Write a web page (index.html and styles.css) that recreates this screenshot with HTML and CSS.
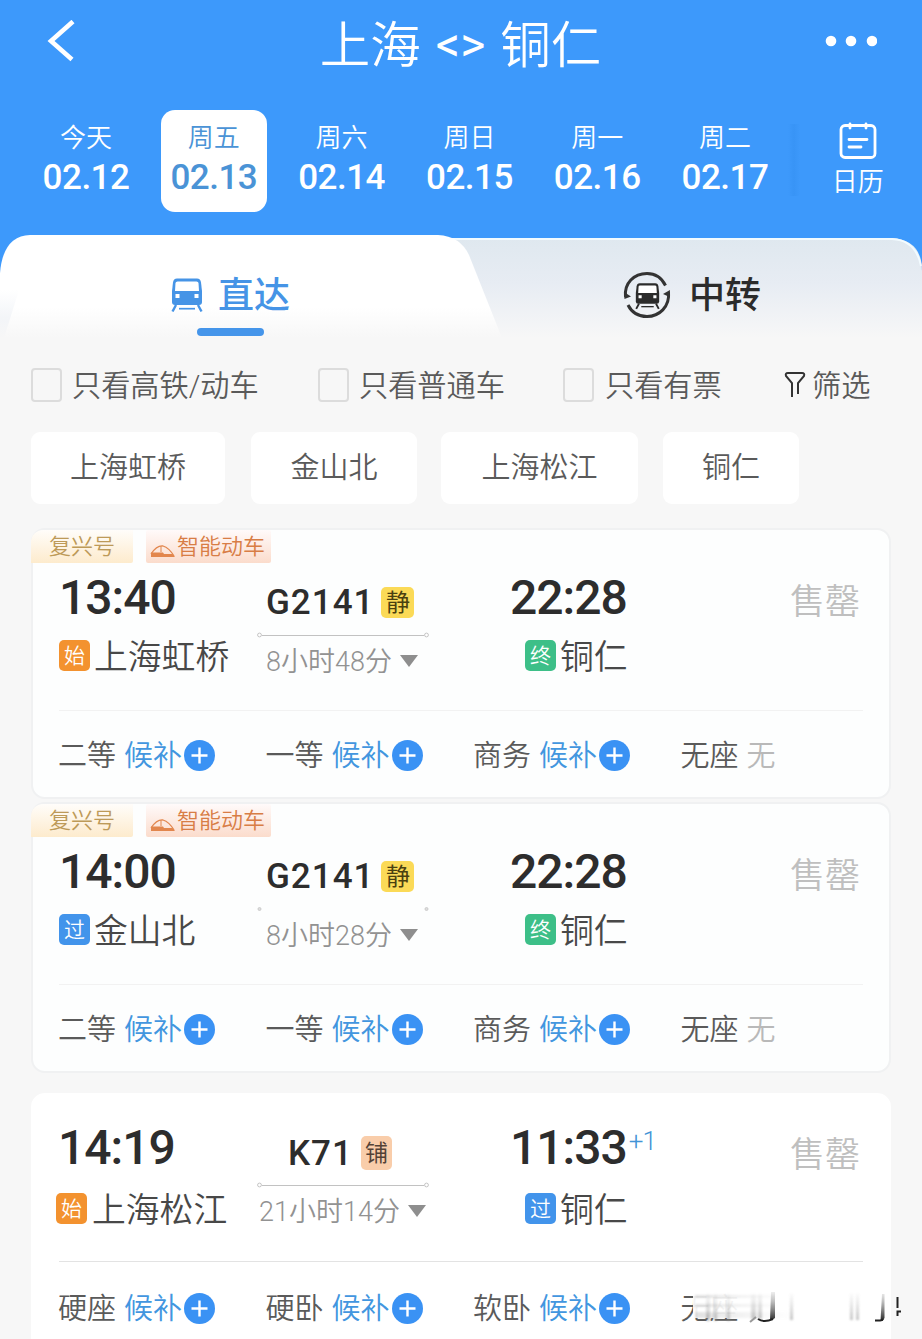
FILE: index.html
```html
<!DOCTYPE html>
<html lang="zh-CN">
<head>
<meta charset="utf-8">
<title>上海 - 铜仁</title>
<link rel="stylesheet" href="styles.css">
</head>
<body>
<svg class="defs" width="0" height="0">
  <symbol id="plus" viewBox="0 0 31 31"><circle cx="15.5" cy="15.5" r="15.5" fill="#3a92f4"/><path d="M15.5 7.500v16M7.500 15.500h16" stroke="#fff" stroke-width="2.400"/></symbol>
  <symbol id="bullet" viewBox="0 0 25 14"><path d="M1 10C5 4 9 1.500 13 2C18 3.500 21 7 24 12" fill="none" stroke="#e2864d" stroke-width="1.300"/><path d="M1 8.500h12l1 1.500h8.500L25 13H1Z" fill="#e2864d"/><path d="M11 2v6" stroke="#e2864d"/></symbol>
  <symbol id="route" viewBox="0 0 172 6"><circle cx="2.500" cy="3" r="1.900" fill="#fff" stroke="#c4c4c4"/><circle cx="169.500" cy="3" r="1.900" fill="#fff" stroke="#c4c4c4"/><path d="M5 3.500h162" stroke="#c2c2c2"/></symbol>
  <symbol id="ends" viewBox="0 0 172 6"><circle cx="2.500" cy="3" r="1.500" fill="#ddd" stroke="#ccc"/><circle cx="169.500" cy="3" r="1.500" fill="#ddd" stroke="#ccc"/></symbol>
  <symbol id="train" viewBox="0 0 32 36"><path d="M6 1.500h20q3.500 0 4 4L31 14v11q0 3-3 3H4q-3 0-3-3V14L2 5.500q.5-4 4-4Z" fill="currentColor"/><path d="M6.500 4.500h19q1.800 0 2 1.500L28 14H4L4.500 6Q4.700 4.500 6.500 4.500Z" class="cut"/><path d="M4.500 17h4v4h-4zM23.500 17h4v4h-4z" class="cut"/><path d="M5 28 1.500 34.500M27 28 30.500 34.500" stroke="currentColor" stroke-width="2.400"/><path d="M8 31.700h16" stroke="currentColor" stroke-width="1.700"/></symbol>
</svg>

<header class="header">
  <div class="titlebar">
    <svg class="back" width="28" height="42" viewBox="0 0 28 42"><path d="M26 1.500 4 21 25 39.500" fill="none" stroke="#fff" stroke-width="4.600"/></svg>
    <h1 class="title"><span>上海</span><span class="swap">&lt;&gt;</span><span>铜仁</span></h1>
    <svg class="more" width="52" height="12" viewBox="0 0 52 12"><circle cx="6" cy="6" r="5.300"/><circle cx="26" cy="6" r="5.300"/><circle cx="47" cy="6" r="5.300"/></svg>
  </div>
  <nav class="dates">
    <div class="date"><span>今天</span><b>02.12</b></div>
    <div class="date selected"><span>周五</span><b>02.13</b></div>
    <div class="date"><span>周六</span><b>02.14</b></div>
    <div class="date"><span>周日</span><b>02.15</b></div>
    <div class="date"><span>周一</span><b>02.16</b></div>
    <div class="date"><span>周二</span><b>02.17</b></div>
    <div class="shade"></div>
    <div class="calendar">
      <svg width="38" height="38" viewBox="0 0 38 38" fill="none" stroke="#fff" stroke-width="2.800" stroke-linecap="round"><rect x="2" y="3.500" width="34" height="32" rx="4"/><path d="M11 2v4M27 2v4M10 17.500h18M10 25h12"/></svg>
      <span>日历</span>
    </div>
  </nav>
</header>

<div class="tabs">
  <svg class="tabs-bg" width="922" height="110" viewBox="0 0 922 110">
    <defs>
      <linearGradient id="g1" x1="0" y1="0" x2="0" y2="1"><stop offset="0" stop-color="#fff"/><stop offset=".7" stop-color="#fff"/><stop offset="1" stop-color="#f7f7f7"/></linearGradient>
      <linearGradient id="g2" x1="0" y1="0" x2="0" y2="1"><stop offset="0" stop-color="#dfe8ef"/><stop offset=".45" stop-color="#e7ecf3"/><stop offset="1" stop-color="#f7f7f7"/></linearGradient>
      <linearGradient id="g3" x1="0" y1="0" x2="0" y2="1"><stop offset="0" stop-color="#f2f5f9" stop-opacity="0"/><stop offset=".6" stop-color="#f3f5f8"/><stop offset="1" stop-color="#f7f7f7"/></linearGradient>
    </defs>
    <path d="M0 110V40H922V110Z" fill="#f7f7f7"/>
    <path d="M430 3H892Q922 5 922 36V103H430Z" fill="url(#g2)"/>
    <path d="M440 4H892Q916 5 921 31" fill="none" stroke="#f2fbff" stroke-width="2"/>
    <path d="M0 38Q3 1 30 0H438Q460 1 469 20L502 103H0Z" fill="url(#g1)"/>
    <path d="M0 55H19L4 103H0Z" fill="url(#g3)"/>
  </svg>
  <div class="tab active"><svg class="ic-train" width="32" height="36"><use href="#train"/></svg><span>直达</span></div>
  <div class="tab">
    <svg class="ic-loop" width="50" height="50" viewBox="0 0 50 50"><path d="M3.500 27C2 13 12 3.500 25 3.500c9 0 15 5 18.500 12M46.500 22C48 37 37 46.500 25 46.500 15 46.500 9 41 6 35" fill="none" stroke="#333" stroke-width="3"/><path d="M2 22 9 26.500 2.500 29ZM48 20 41 24 47.500 27Z" fill="#333"/><svg x="13" y="12" width="25" height="28" viewBox="0 0 32 36"><use href="#train" width="32" height="36"/></svg></svg>
    <span>中转</span>
  </div>
  <i class="underline"></i>
</div>

<div class="filters">
  <label class="check c1"><i></i>只看高铁/动车</label>
  <label class="check c2"><i></i>只看普通车</label>
  <label class="check c3"><i></i>只看有票</label>
  <span class="funnel"><svg width="22" height="28" viewBox="0 0 22 28" fill="none" stroke="#333" stroke-width="2"><path d="M8 26V12L2 5Q1 2 4 2H18Q21 2 20 5L14 12V23"/></svg>筛选</span>
</div>

<div class="chips">
  <span class="chip w1">上海虹桥</span><span class="chip w2">金山北</span><span class="chip w3">上海松江</span><span class="chip w4">铜仁</span>
</div>

<main class="list">
  <section class="card">
    <div class="tags"><span class="tag gold">复兴号</span><span class="tag smart"><svg width="25" height="14"><use href="#bullet"/></svg>智能动车</span></div>
    <div class="trip">
      <div class="dep"><div class="time">13:40</div><div class="station"><i class="badge start">始</i>上海虹桥</div></div>
      <div class="mid"><div class="no">G2141<i class="mark quiet">静</i></div><svg class="route" width="172" height="6"><use href="#route"/></svg><div class="dur">8小时48分<i class="arrow"></i></div></div>
      <div class="arr"><div class="time">22:28</div><div class="station"><i class="badge end">终</i>铜仁</div></div>
      <div class="status">售罄</div>
    </div>
    <div class="seats">
      <div class="seat">二等<em>候补</em><svg class="plus" width="31" height="31"><use href="#plus"/></svg></div>
      <div class="seat">一等<em>候补</em><svg class="plus" width="31" height="31"><use href="#plus"/></svg></div>
      <div class="seat">商务<em>候补</em><svg class="plus" width="31" height="31"><use href="#plus"/></svg></div>
      <div class="seat">无座<em class="none">无</em></div>
    </div>
  </section>

  <section class="card">
    <div class="tags"><span class="tag gold">复兴号</span><span class="tag smart"><svg width="25" height="14"><use href="#bullet"/></svg>智能动车</span></div>
    <div class="trip">
      <div class="dep"><div class="time">14:00</div><div class="station"><i class="badge pass">过</i>金山北</div></div>
      <div class="mid"><div class="no">G2141<i class="mark quiet">静</i></div><svg class="route" width="172" height="6"><use href="#ends"/></svg><div class="dur">8小时28分<i class="arrow"></i></div></div>
      <div class="arr"><div class="time">22:28</div><div class="station"><i class="badge end">终</i>铜仁</div></div>
      <div class="status">售罄</div>
    </div>
    <div class="seats">
      <div class="seat">二等<em>候补</em><svg class="plus" width="31" height="31"><use href="#plus"/></svg></div>
      <div class="seat">一等<em>候补</em><svg class="plus" width="31" height="31"><use href="#plus"/></svg></div>
      <div class="seat">商务<em>候补</em><svg class="plus" width="31" height="31"><use href="#plus"/></svg></div>
      <div class="seat">无座<em class="none">无</em></div>
    </div>
  </section>

  <section class="card plain">
    <div class="trip">
      <div class="dep"><div class="time">14:19</div><div class="station"><i class="badge start">始</i>上海松江</div></div>
      <div class="mid"><div class="no">K71<i class="mark berth">铺</i></div><svg class="route" width="172" height="6"><use href="#route"/></svg><div class="dur">21小时14分<i class="arrow"></i></div></div>
      <div class="arr"><div class="time">11:33<sup>+1</sup></div><div class="station"><i class="badge pass">过</i>铜仁</div></div>
      <div class="status">售罄</div>
    </div>
    <div class="seats">
      <div class="seat">硬座<em>候补</em><svg class="plus" width="31" height="31"><use href="#plus"/></svg></div>
      <div class="seat">硬卧<em>候补</em><svg class="plus" width="31" height="31"><use href="#plus"/></svg></div>
      <div class="seat">软卧<em>候补</em><svg class="plus" width="31" height="31"><use href="#plus"/></svg></div>
      <div class="seat">无座
        <svg class="smear" width="225" height="40" viewBox="0 0 225 40">
          <defs>
            <linearGradient id="v" x1="0" y1="0" x2="0" y2="1"><stop offset="0" stop-color="#999" stop-opacity=".05"/><stop offset="1" stop-color="#888" stop-opacity=".5"/></linearGradient>
            <linearGradient id="k" x1="0" y1="0" x2="0" y2="1"><stop offset="0" stop-color="#888" stop-opacity=".15"/><stop offset="1" stop-color="#222"/></linearGradient>
            <linearGradient id="h" x1="0" y1="0" x2="1" y2="0"><stop offset="0" stop-color="#999" stop-opacity=".3"/><stop offset="1" stop-color="#ccc" stop-opacity="0"/></linearGradient>
            <filter id="soft" x="-10%" y="-10%" width="120%" height="120%"><feGaussianBlur stdDeviation="1"/></filter>
          </defs>
          <path d="M12 3H200V30H12Z" fill="#fff" fill-opacity=".93"/>
          <g filter="url(#soft)">
            <path d="M14 7h80v3H14zM14 16h80v3H14zM14 24h100v6H14z" fill="url(#h)"/>
            <path d="M25 6h4v27h-4zM33 6h3v27h-3zM46 6h3v27h-3zM70 6h5v25h-5zM77 6h4v25h-4zM109 6h3v26h-3zM169 6h3v26h-3zM175 6h3v26h-3z" fill="url(#v)"/>
          </g>
          <path d="M90 4h4v26l-3 2h-2zM201 6h2.500v24l-2 3h-2z" fill="url(#k)"/>
          <path d="M77 31Q83 35 92 31M194 32.500H198Q201 33 202 31" fill="none" stroke="#222" stroke-width="2"/>
          <path d="M69 34 75 29" stroke="#999" stroke-width="2"/>
          <path d="M216.500 9V20M220 23.500H216.500V28" fill="none" stroke="#222" stroke-width="2"/>
        </svg>
      </div>
    </div>
  </section>
</main>
</body>
</html>
```
FILE: styles.css
```css
* { box-sizing: border-box; }
body {
  margin: 0;
  width: 922px;
  height: 1339px;
  overflow: hidden;
  background: #f7f7f7;
  color: #5a5a5a;
  font-family: Roboto, "Noto Sans CJK SC", sans-serif;
  font-weight: 350;
  line-height: 1.2;
}
i, em { font-style: normal; }
svg { flex: none; }
.defs { display: block; }
.cut { fill: #fff; }

.header { height: 275px; background: #3d99fb; color: #fff; }
.titlebar { height: 110px; display: flex; justify-content: space-between; padding: 0 45px 0 47px; }
.back { margin-top: 20px; }
.more { margin-top: 35px; fill: #fff; }
.title { display: flex; gap: 15px; margin: 16px 0 0 21px; font-size: 50.500px; line-height: 60px; font-weight: 350; }
.swap { font-size: 48px; font-weight: 400; line-height: 57px; }
.dates { display: flex; padding-left: 33px; }
.date {
  width: 106px;
  height: 102px;
  margin-right: 21.800px;
  padding-top: 13px;
  border-radius: 14px;
  display: flex;
  flex-direction: column;
  align-items: center;
  font-size: 26px;
  line-height: 30px;
}
.date b { font-size: 35px; line-height: 50px; font-weight: 500; letter-spacing: -.5px; }
.date.selected { background: #fff; color: #4a93d6; }
.shade { width: 12px; height: 72px; margin: 14px 0 0 -12px; background: linear-gradient(90deg, #3d99fb, #3894f6, #3d99fb); }
.calendar { margin: 12px 0 0 32px; display: flex; flex-direction: column; align-items: center; font-size: 26px; line-height: 44px; }

.tabs { position: relative; height: 110px; margin-top: -40px; display: flex; }
.tabs-bg { position: absolute; left: 0; top: 0; }
.tab { position: relative; display: flex; align-items: center; height: 120px; color: #2b2b2b; font-size: 36px; font-weight: 500; padding-left: 161px; }
.tab.active { width: 461px; padding-left: 171px; color: #4694e6; }
.tab span { padding-top: 4px; }
.ic-train { margin-right: 15px; }
.ic-loop { margin-right: 17px; }
.underline { position: absolute; left: 197px; top: 93px; width: 67px; height: 8px; border-radius: 4px; background: #4595ea; }

.filters { display: flex; height: 80px; align-items: center; padding-left: 31px; font-size: 29.200px; }
.check, .funnel { display: flex; align-items: center; padding-top: 3px; }
.check i { width: 31px; height: 34px; margin: -3px 10px 0 0; border: 2.500px solid #dcdcdc; border-radius: 4px; }
.c1 { width: 287px; }
.c2 { width: 245px; }
.c3 { width: 221px; }
.check.c3 i { margin-right: 11px; }
.funnel { gap: 6px; }
.funnel svg { margin-top: -3px; }

.chips { display: flex; margin-top: 7px; padding-left: 31px; }
.chip { height: 72px; line-height: 72px; text-align: center; background: #fff; border-radius: 9px; font-size: 29px; }
.w1 { width: 194px; margin-right: 26px; }
.w2 { width: 166px; margin-right: 24px; }
.w3 { width: 197px; margin-right: 25px; }
.w4 { width: 136px; }

.list { padding: 24px 31px 0; }
.card {
  position: relative;
  height: 271px;
  width: 860px;
  margin-bottom: 3px;
  background: #fdfefe;
  border: 2px solid #f0f1f2;
  border-radius: 14px;
}
.card.plain { margin-top: 20px; height: 290px; background: #fff; border-color: #fff; }
.tags { display: flex; gap: 13px; height: 33px; margin-left: -2px; }
.tag { height: 33px; line-height: 33px; font-size: 22px; }
.gold { width: 102px; padding-left: 18px; border-radius: 12px 0 2px 0; color: #bd9a58; background: linear-gradient(#fffdfa, #fdebcd); }
.smart { width: 125px; display: flex; align-items: center; padding-left: 4px; gap: 2px; color: #d87d45; border-radius: 2px; background: linear-gradient(#fffafa, #fbdccc); }
.smart svg { margin-top: 8px; }
.trip { display: flex; height: 148px; margin: 0 26px; border-bottom: 1px solid #f2f2f2; }
.plain .trip { height: 149px; margin-top: 18px; border-color: #e3e3e3; }
.dep { width: 198px; padding-top: 10px; }
.time { position: relative; font-size: 48px; line-height: 50px; font-weight: 500; color: #2d2d2d; letter-spacing: -1px; }
.station { display: flex; align-items: center; height: 40px; margin-top: 14px; padding-top: 3px; font-size: 33.800px; color: #484848; white-space: nowrap; }
.plain .station { margin-top: 17px; }
.plain .dep .station { margin-left: -3px; }
.plain .dep .badge { margin-right: 5px; }
.plain .dep .time { margin-left: -1px; }
.badge { width: 31px; height: 31px; margin: -6px 4px 0 0; border-radius: 5px; line-height: 32px; text-align: center; font-size: 21px; color: #fff; }
.start { background: #f3922f; }
.pass { background: #4294eb; }
.end { background: #3dbf88; }
.mid { width: 172px; padding-top: 19px; }
.no { display: flex; align-items: center; height: 40px; padding: 2px 0 0 9px; font-size: 35px; font-weight: 500; color: #2d2d2d; letter-spacing: 1px; }
.mark { width: 33px; height: 31px; margin: -2px 0 0 7px; border-radius: 5px; font-size: 24px; line-height: 32px; text-align: center; letter-spacing: 0; font-weight: 400; }
.quiet { background: #fbda57; color: #4a4010; }
.berth { width: 31px; height: 34px; line-height: 35px; margin-left: 8px; background: #f9cdaa; color: #544236; font-size: 23px; }
.plain .no { padding-left: 31px; height: 42px; }
.route { display: block; margin-top: 10px; }
.plain .route { margin-top: 8px; }
.dur { display: flex; align-items: center; height: 30px; margin-top: 8px; padding: 3px 0 0 9px; font-size: 27px; color: #929292; white-space: nowrap; }
.plain .dur { padding-left: 2px; }
.arrow { margin: -3px 0 0 8px; border: 9px solid transparent; border-top: 12px solid #8e8e8e; border-bottom: 0; }
.arr { width: 304px; padding: 10px 0 0 81px; }
.arr .station { padding-left: 15px; }
sup { position: absolute; top: -2px; margin-left: 2px; font-size: 26px; line-height: 40px; font-weight: 300; letter-spacing: -1px; color: #4294d6; }
.status { margin-left: 57px; padding-top: 19px; font-size: 35px; line-height: 41px; color: #bfbfbf; white-space: nowrap; }
.plain .status { padding-top: 22px; }
.seats { display: flex; margin: 24px 0 0 25px; }
.plain .seats { margin-top: 26px; }
.seat { position: relative; width: 207.500px; flex: none; display: flex; align-items: center; height: 40px; padding-top: 3px; font-size: 29px; white-space: nowrap; }
.seat em { margin: 0 2px 0 8px; color: #4296df; }
.seat em.none { color: #b9b9b9; }
.plus { margin-top: -3px; }
.smear { position: absolute; left: 0; top: 0; }
```
